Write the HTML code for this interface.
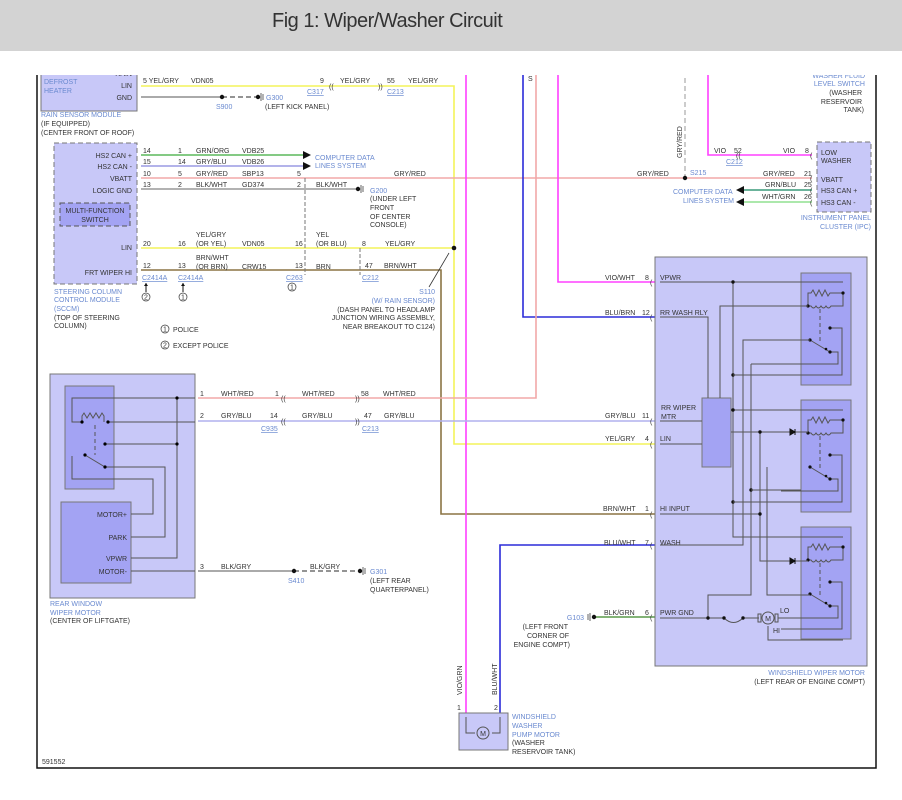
<!DOCTYPE html>
<html><head><meta charset="utf-8"><style>
html,body{margin:0;padding:0;background:#fff;width:902px;height:800px;overflow:hidden}
.hdr{position:absolute;left:0;top:0;width:902px;height:51px;background:#d3d3d3;z-index:2}
.hdr span{position:absolute;left:272px;top:10px;font-family:"Liberation Sans",sans-serif;font-size:20px;color:#333;letter-spacing:-0.5px;white-space:nowrap}
svg{position:absolute;left:0;top:0}
text{font-family:"Liberation Sans",sans-serif;font-size:7px;fill:#333}
.b{fill:#6a8ad0}
.u{fill:#6a8ad0;text-decoration:underline}
.w{fill:none;stroke-width:1.6}
.k{fill:none;stroke:#555;stroke-width:1}
</style></head><body>
<div class="hdr"><span>Fig 1: Wiper/Washer Circuit</span></div>
<svg width="902" height="800" viewBox="0 0 902 800">
<defs>
<g id="relay">
<rect x="0" y="0" width="50" height="112" fill="#a3a3f3" stroke="#777"/>
<path class="k" d="M7 33V20H10l2-3 3 6 3-6 3 6 3-6 3 6 2-3H42"/>
<path class="k" d="M7 33H10q2.5 4 5 0q2.5 4 5 0q2.5 4 5 0q2.5 4 5 0H42V20"/>
<circle cx="42" cy="20" r="1.6" fill="#111"/><circle cx="7" cy="33" r="1.6" fill="#111"/>
<path d="M19 36V70" stroke="#555" stroke-dasharray="4 3" fill="none"/>
<path class="k" d="M29 55H41V102H-20"/>
<circle cx="29" cy="55" r="1.6" fill="#111"/>
<path class="k" d="M9 67L29 79H37V91H-20"/>
<circle cx="9" cy="67" r="1.6" fill="#111"/><circle cx="25" cy="76" r="1.3" fill="#111"/><circle cx="29" cy="79" r="1.6" fill="#111"/>
</g>
</defs>
<!-- frame -->
<path d="M37 75V768H876V75" fill="none" stroke="#111" stroke-width="1.5"/>

<!-- Rain sensor module -->
<rect x="41" y="66" width="96" height="45" fill="#c8c8f8" stroke="#777"/>
<text x="132" y="76" text-anchor="end">RAIN</text>
<text x="44" y="84" class="b">DEFROST</text><text x="44" y="93" class="b">HEATER</text>
<text x="132" y="88" text-anchor="end">LIN</text><text x="132" y="100" text-anchor="end">GND</text>
<text x="41" y="117" class="b">RAIN SENSOR MODULE</text><text x="41" y="126">(IF EQUIPPED)</text><text x="41" y="135">(CENTER FRONT OF ROOF)</text>
<path class="w" stroke="#f4f45a" d="M141 86H454V444H655"/>
<text x="143" y="83">5 YEL/GRY</text><text x="191" y="83">VDN05</text><text x="320" y="83">9</text><text x="340" y="83">YEL/GRY</text><text x="387" y="83">55</text><text x="408" y="83">YEL/GRY</text>
<text x="329" y="89" font-size="9">((</text><text x="378" y="89" font-size="9">))</text>
<text x="307" y="94" class="u">C317</text><text x="387" y="94" class="u">C213</text>
<path d="M141 97H222" stroke="#777" stroke-width="1.3"/><path d="M222 97H258" stroke="#555" stroke-dasharray="5 3" stroke-width="1.3"/>
<circle cx="222" cy="97" r="2.2" fill="#111"/><circle cx="258" cy="97" r="2.2" fill="#111"/><path d="M261 93v8M263 94v6" stroke="#666"/>
<text x="266" y="100" class="b">G300</text><text x="216" y="109" class="b">S900</text><text x="265" y="109">(LEFT KICK PANEL)</text>

<!-- SCCM -->
<rect x="54" y="143" width="83" height="141" fill="#c8c8f8" stroke="#777" stroke-dasharray="5 3"/>
<rect x="60" y="203" width="70" height="23" fill="#a3a3f3" stroke="#555" stroke-dasharray="5 3"/>
<text x="95" y="213" text-anchor="middle">MULTI-FUNCTION</text><text x="95" y="222" text-anchor="middle">SWITCH</text>
<text x="132" y="158" text-anchor="end">HS2 CAN +</text><text x="132" y="169" text-anchor="end">HS2 CAN -</text><text x="132" y="181" text-anchor="end">VBATT</text><text x="132" y="193" text-anchor="end">LOGIC GND</text><text x="132" y="250" text-anchor="end">LIN</text><text x="132" y="275" text-anchor="end">FRT WIPER HI</text>
<path class="w" stroke="#5cb85c" d="M141 155H303"/><path d="M303 151l8 4-8 4z" fill="#111"/>
<path class="w" stroke="#9a9ae4" d="M141 166H303"/><path d="M303 162l8 4-8 4z" fill="#111"/>
<path class="w" stroke="#f2a8a8" d="M141 178H812"/>
<path class="w" stroke="#999" d="M141 189H358"/><circle cx="358" cy="189" r="2.2" fill="#111"/><path d="M361 185v8M363 186v6" stroke="#666"/>
<path class="w" stroke="#f4f45a" d="M141 248H454"/><circle cx="454" cy="248" r="2.3" fill="#111"/>
<path class="w" stroke="#8b7444" d="M141 270H441V514H655"/>
<path d="M305 178V275M360 248V275" stroke="#777" stroke-dasharray="4 2" fill="none"/>
<text x="143" y="153">14</text><text x="178" y="153">1</text><text x="196" y="153">GRN/ORG</text><text x="242" y="153">VDB25</text>
<text x="143" y="164">15</text><text x="178" y="164">14</text><text x="196" y="164">GRY/BLU</text><text x="242" y="164">VDB26</text>
<text x="143" y="176">10</text><text x="178" y="176">5</text><text x="196" y="176">GRY/RED</text><text x="242" y="176">SBP13</text><text x="297" y="176">5</text><text x="394" y="176">GRY/RED</text>
<text x="143" y="187">13</text><text x="178" y="187">2</text><text x="196" y="187">BLK/WHT</text><text x="242" y="187">GD374</text><text x="297" y="187">2</text><text x="316" y="187">BLK/WHT</text>
<text x="315" y="160" class="b">COMPUTER DATA</text><text x="315" y="168" class="b">LINES SYSTEM</text>
<text x="370" y="193" class="b">G200</text><text x="370" y="201">(UNDER LEFT</text><text x="370" y="210">FRONT</text><text x="370" y="219">OF CENTER</text><text x="370" y="227">CONSOLE)</text>
<text x="143" y="246">20</text><text x="178" y="246">16</text><text x="196" y="237">YEL/GRY</text><text x="196" y="246">(OR YEL)</text><text x="242" y="246">VDN05</text><text x="295" y="246">16</text><text x="316" y="237">YEL</text><text x="316" y="246">(OR BLU)</text><text x="362" y="246">8</text><text x="385" y="246">YEL/GRY</text>
<text x="143" y="268">12</text><text x="178" y="268">13</text><text x="196" y="260">BRN/WHT</text><text x="196" y="269">(OR BRN)</text><text x="242" y="269">CRW15</text><text x="295" y="268">13</text><text x="316" y="269">BRN</text><text x="365" y="268">47</text><text x="384" y="268">BRN/WHT</text>
<text x="142" y="280" class="u">C2414A</text><text x="178" y="280" class="u">C2414A</text><text x="286" y="280" class="u">C263</text><text x="362" y="280" class="u">C212</text>
<path d="M146 283V292M183 283V292" stroke="#111"/><path d="M144 286l2-3 2 3zM181 286l2-3 2 3z" fill="#111"/>
<circle cx="146" cy="297" r="4" fill="none" stroke="#333" stroke-width=".7"/><text x="146" y="299.5" text-anchor="middle" font-size="6">2</text>
<circle cx="183" cy="297" r="4" fill="none" stroke="#333" stroke-width=".7"/><text x="183" y="299.5" text-anchor="middle" font-size="6">1</text>
<circle cx="292" cy="287" r="4" fill="none" stroke="#333" stroke-width=".7"/><text x="292" y="289.5" text-anchor="middle" font-size="6">1</text>
<text x="54" y="294" class="b">STEERING COLUMN</text><text x="54" y="302" class="b">CONTROL MODULE</text><text x="54" y="311" class="b">(SCCM)</text><text x="54" y="320">(TOP OF STEERING</text><text x="54" y="328">COLUMN)</text>
<circle cx="165" cy="329" r="4" fill="none" stroke="#333" stroke-width=".7"/><text x="165" y="331.5" text-anchor="middle" font-size="6">1</text><text x="173" y="332">POLICE</text>
<circle cx="165" cy="345" r="4" fill="none" stroke="#333" stroke-width=".7"/><text x="165" y="347.5" text-anchor="middle" font-size="6">2</text><text x="173" y="348">EXCEPT POLICE</text>
<path d="M429 287L449 253" stroke="#333" stroke-width=".8"/>
<text x="435" y="294" text-anchor="end" class="b">S110</text><text x="435" y="303" text-anchor="end" class="b">(W/ RAIN SENSOR)</text><text x="435" y="312" text-anchor="end">(DASH PANEL TO HEADLAMP</text><text x="435" y="320" text-anchor="end">JUNCTION WIRING ASSEMBLY,</text><text x="435" y="329" text-anchor="end">NEAR BREAKOUT TO C124)</text>

<!-- verticals top -->
<path class="w" stroke="#ff40ff" d="M466 70V713"/>
<path class="w" stroke="#2b2bd8" d="M523 70V317H655"/>
<path class="w" stroke="#f2a8a8" d="M536 70V398H198"/>
<path class="w" stroke="#ff40ff" d="M558 70V282H655"/>
<path class="w" stroke="#ff40ff" d="M708 70V155H812"/>
<text x="528" y="81" font-size="6">S</text>
<path d="M685 70V178" stroke="#999" stroke-dasharray="5 3" fill="none"/>
<text transform="translate(682,158) rotate(-90)" font-size="6.5">GRY/RED</text>
<circle cx="685" cy="178" r="2.2" fill="#111"/><text x="690" y="175" class="b">S215</text><text x="637" y="176">GRY/RED</text>
<text x="714" y="153">VIO</text><text x="734" y="153">52</text><text x="726" y="164" class="u">C212</text><text x="783" y="153">VIO</text><text x="805" y="153">8</text>
<text x="763" y="176">GRY/RED</text><text x="804" y="176">21</text><text x="765" y="187">GRN/BLU</text><text x="804" y="187">25</text><text x="762" y="199">WHT/GRN</text><text x="804" y="199">26</text>
<path class="w" stroke="#3a9a7a" d="M744 190H812"/><path class="w" stroke="#90e090" d="M744 202H812"/>
<path d="M744 186l-8 4 8 4zM744 198l-8 4 8 4z" fill="#111"/>
<text x="673" y="194" class="b">COMPUTER DATA</text><text x="683" y="203" class="b">LINES SYSTEM</text>
<rect x="817" y="142" width="54" height="70" fill="#c8c8f8" stroke="#777" stroke-dasharray="5 3"/>
<text x="821" y="155">LOW</text><text x="821" y="163">WASHER</text><text x="821" y="182">VBATT</text><text x="821" y="193">HS3 CAN +</text><text x="821" y="205">HS3 CAN -</text>
<text x="871" y="220" text-anchor="end" class="b">INSTRUMENT PANEL</text><text x="871" y="229" text-anchor="end" class="b">CLUSTER (IPC)</text>
<text x="865" y="78" text-anchor="end" class="b">WASHER FLUID</text><text x="865" y="86" text-anchor="end" class="b">LEVEL SWITCH</text><text x="862" y="95" text-anchor="end">(WASHER</text><text x="862" y="104" text-anchor="end">RESERVOIR</text><text x="864" y="112" text-anchor="end">TANK)</text>

<!-- rear wiper motor -->
<rect x="50" y="374" width="145" height="224" fill="#c8c8f8" stroke="#777"/>
<rect x="65" y="386" width="49" height="103" fill="#a3a3f3" stroke="#777"/>
<rect x="61" y="502" width="70" height="81" fill="#a3a3f3" stroke="#777"/>
<text x="127" y="517" text-anchor="end">MOTOR+</text><text x="127" y="540" text-anchor="end">PARK</text><text x="127" y="561" text-anchor="end">VPWR</text><text x="127" y="574" text-anchor="end">MOTOR-</text>
<path class="k" d="M195 398H72V422H82M108 422H195M105 444H177M177 398V558H131M72 456V479H153V514H131M85 455L105 467H165V537H131M131 571H195"/>
<path class="k" d="M82 422V416l2-3 3 5 3-5 3 5 3-5 3 5 3-5 2 3V422"/>
<path d="M95 425V455" stroke="#555" stroke-dasharray="4 3"/>
<circle cx="177" cy="398" r="1.6"/><circle cx="82" cy="422" r="1.6"/><circle cx="108" cy="422" r="1.6"/><circle cx="105" cy="444" r="1.6"/><circle cx="177" cy="444" r="1.6"/><circle cx="85" cy="455" r="1.6"/><circle cx="105" cy="467" r="1.6"/>
<path class="w" stroke="#b0b0ee" d="M198 421H655"/>
<text x="200" y="396">1</text><text x="221" y="396">WHT/RED</text><text x="275" y="396">1</text><text x="302" y="396">WHT/RED</text><text x="361" y="396">58</text><text x="383" y="396">WHT/RED</text>
<text x="200" y="418">2</text><text x="221" y="418">GRY/BLU</text><text x="270" y="418">14</text><text x="302" y="418">GRY/BLU</text><text x="364" y="418">47</text><text x="384" y="418">GRY/BLU</text>
<text x="261" y="431" class="u">C935</text><text x="362" y="431" class="u">C213</text>
<text x="281" y="401" font-size="9">((</text><text x="281" y="424" font-size="9">((</text><text x="355" y="401" font-size="9">))</text><text x="355" y="424" font-size="9">))</text>
<path d="M198 571H294" stroke="#777" stroke-width="1.3"/><path d="M294 571H360" stroke="#555" stroke-dasharray="5 3" stroke-width="1.3"/>
<circle cx="294" cy="571" r="2.2" fill="#111"/><circle cx="360" cy="571" r="2.2" fill="#111"/><path d="M363 567v8M365 568v6" stroke="#666"/>
<text x="200" y="569">3</text><text x="221" y="569">BLK/GRY</text><text x="310" y="569">BLK/GRY</text><text x="288" y="583" class="b">S410</text><text x="370" y="574" class="b">G301</text><text x="370" y="583">(LEFT REAR</text><text x="370" y="592">QUARTERPANEL)</text>
<text x="50" y="606" class="b">REAR WINDOW</text><text x="50" y="615" class="b">WIPER MOTOR</text><text x="50" y="623">(CENTER OF LIFTGATE)</text>

<!-- windshield wiper motor -->
<path class="w" stroke="#2b2bd8" d="M655 545H500V713"/>
<path class="w" stroke="#5a9a4a" d="M596 617H655"/><circle cx="594" cy="617" r="2.2" fill="#111"/><path d="M590 613v8M588 614v6" stroke="#666"/>
<text x="584" y="620" text-anchor="end" class="b">G103</text><text x="568" y="629" text-anchor="end">(LEFT FRONT</text><text x="569" y="638" text-anchor="end">CORNER OF</text><text x="570" y="647" text-anchor="end">ENGINE COMPT)</text>
<rect x="655" y="257" width="212" height="409" fill="#c8c8f8" stroke="#777"/>
<text x="865" y="675" text-anchor="end" class="b">WINDSHIELD WIPER MOTOR</text><text x="865" y="684" text-anchor="end">(LEFT REAR OF ENGINE COMPT)</text>
<text x="605" y="280">VIO/WHT</text><text x="645" y="280">8</text><text x="605" y="315">BLU/BRN</text><text x="642" y="315">12</text><text x="605" y="418">GRY/BLU</text><text x="642" y="418">11</text><text x="605" y="441">YEL/GRY</text><text x="645" y="441">4</text><text x="603" y="511">BRN/WHT</text><text x="645" y="511">1</text><text x="604" y="545">BLU/WHT</text><text x="645" y="545">7</text><text x="604" y="615">BLK/GRN</text><text x="645" y="615">6</text>
<text x="660" y="280">VPWR</text><text x="660" y="315">RR WASH RLY</text><text x="661" y="410">RR WIPER</text><text x="661" y="419">MTR</text><text x="660" y="441">LIN</text><text x="660" y="511">HI INPUT</text><text x="660" y="545">WASH</text><text x="660" y="615">PWR GND</text>
<use href="#relay" x="801" y="273"/><use href="#relay" x="801" y="400"/><use href="#relay" x="801" y="527"/>
<rect x="702" y="398" width="29" height="69" fill="#a3a3f3" stroke="#777"/>
<path class="k" d="M660 282H843M660 317H708V398M720 398V306H808M660 421H702M660 444H702M660 514H760M660 545H743V340H810M751 364V595H708V618M733 282V537H843M731 410H843M731 432H808M760 432V561H808M767 467V595H810M660 618H724M743 618H759M778 618H838M768 626V640H843"/>
<path class="k" d="M724 618q9.5 9 19 0"/>
<path d="M790 429v6l5-3zM795 429v6M790 558v6l5-3zM795 558v6" fill="#111" stroke="#111"/>
<circle cx="768" cy="618" r="6" fill="#c8c8f8" stroke="#555"/><rect x="758" y="614" width="3" height="8" fill="none" stroke="#555"/><rect x="775" y="614" width="3" height="8" fill="none" stroke="#555"/><text x="768" y="621" text-anchor="middle" font-size="8">M</text>
<text x="780" y="613">LO</text><text x="773" y="633">HI</text>
<g fill="#111"><circle cx="733" cy="282" r="1.7"/><circle cx="733" cy="375" r="1.7"/><circle cx="733" cy="410" r="1.7"/><circle cx="760" cy="432" r="1.7"/><circle cx="751" cy="490" r="1.7"/><circle cx="733" cy="502" r="1.7"/><circle cx="760" cy="514" r="1.7"/><circle cx="708" cy="618" r="1.7"/><circle cx="724" cy="618" r="1.7"/><circle cx="743" cy="618" r="1.7"/></g>
<path class="k" d="M751 490H801M733 502H801M733 375H801M751 364H801"/>
<g font-size="9"><text x="650" y="285">(</text><text x="650" y="320">(</text><text x="650" y="424">(</text><text x="650" y="447">(</text><text x="650" y="517">(</text><text x="650" y="548">(</text><text x="650" y="620">(</text><text x="810" y="158">(</text><text x="810" y="181">(</text><text x="810" y="193">(</text><text x="810" y="205">(</text><text x="736" y="158">((</text></g>

<!-- pump -->
<rect x="459" y="713" width="49" height="37" fill="#c8c8f8" stroke="#777"/>
<path class="k" d="M466 717V733H475M492 733H500V717"/>
<circle cx="483" cy="733" r="6" fill="#c8c8f8" stroke="#555"/><text x="483" y="736" text-anchor="middle" font-size="8">M</text>
<text transform="translate(462,695) rotate(-90)" font-size="6.5">VIO/GRN</text><text transform="translate(497,695) rotate(-90)" font-size="6.5">BLU/WHT</text>
<text x="457" y="710" font-size="6">1</text><text x="494" y="710" font-size="6">2</text>
<text x="512" y="719" class="b">WINDSHIELD</text><text x="512" y="728" class="b">WASHER</text><text x="512" y="737" class="b">PUMP MOTOR</text><text x="512" y="745">(WASHER</text><text x="512" y="754">RESERVOIR TANK)</text>
<text x="42" y="764" font-size="6.5">591552</text>
<rect x="0" y="51" width="902" height="24" fill="#fff"/>
</svg>
</body></html>
